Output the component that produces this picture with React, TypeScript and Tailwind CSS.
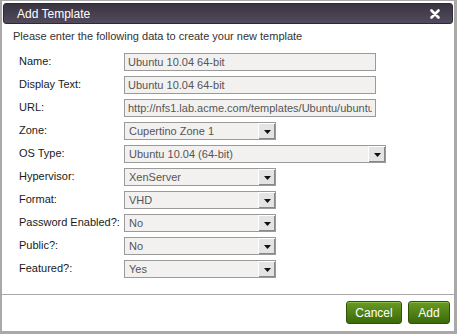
import React from "react";

const Arrow = () => (
  <div className="w-[17px] h-[16px] border-l border-t border-[#ffffff] bg-[#e4e4e4] shadow-[inset_-1px_-1px_0_#888] flex items-center justify-center">
    <svg width="7" height="4" viewBox="0 0 7 4"><path d="M0 0h7L3.5 4z" fill="#111" /></svg>
  </div>
);

const TextInput = ({ value }: { value: string }) => (
  <input
    readOnly
    value={value}
    className="w-[252px] h-[18px] border border-[#9a9a9a] bg-[#f2f1f0] px-[3px] text-[11px] leading-[16px] text-[#555] outline-none"
    style={{ fontFamily: '"Liberation Sans", Arial, sans-serif' }}
  />
);

const Select = ({ value, w }: { value: string; w: string }) => (
  <div className={`${w} h-[18px] border border-[#9a9a9a] bg-[#f2f1f0] flex items-center text-[11px] text-[#555]`}>
    <span className="flex-1 pl-[4px] leading-[16px] whitespace-nowrap overflow-hidden">{value}</span>
    <Arrow />
  </div>
);

const Row = ({ label, children }: { label: string; children: React.ReactNode }) => (
  <div className="flex items-start h-[23px]">
    <div className="w-[105px] text-[11px] text-[#1a1a1a] leading-[13px] pt-[2px]">{label}</div>
    {children}
  </div>
);

export default function App() {
  return (
    <div
      className="w-[457px] h-[334px] bg-white border-t border-l-2 border-r-[3px] border-b-[3px] border-[#a9a9a9] flex flex-col"
      style={{ fontFamily: '"Liberation Sans", Arial, sans-serif' }}
    >
      <div className="mx-[1px] mt-[2px] h-[21px] rounded-[3px] bg-gradient-to-b from-[#3a3541] to-[#524a5d] border border-[#2e2a34] flex items-center justify-between pl-[13px] pr-[12px]">
        <span className="text-white text-[12px]">Add Template</span>
        <svg width="10" height="10" viewBox="0 0 10 10">
          <path d="M1.5 1.5l7 7M8.5 1.5l-7 7" stroke="#fff" strokeWidth="2.6" strokeLinecap="round" />
        </svg>
      </div>
      <div className="pl-[11px] pt-[6px] text-[11px] text-[#333] leading-[13px]">
        Please enter the following data to create your new template
      </div>
      <div className="pl-[17px] pt-[10px] flex flex-col">
        <Row label="Name:"><TextInput value="Ubuntu 10.04 64-bit" /></Row>
        <Row label="Display Text:"><TextInput value="Ubuntu 10.04 64-bit" /></Row>
        <Row label="URL:"><TextInput value="http://nfs1.lab.acme.com/templates/Ubuntu/ubuntu-10.04-64bit.vhd.bz2" /></Row>
        <Row label="Zone:"><Select value="Cupertino Zone 1" w="w-[152px]" /></Row>
        <Row label="OS Type:"><Select value="Ubuntu 10.04 (64-bit)" w="w-[262px]" /></Row>
        <Row label="Hypervisor:"><Select value="XenServer" w="w-[152px]" /></Row>
        <Row label="Format:"><Select value="VHD" w="w-[152px]" /></Row>
        <Row label="Password Enabled?:"><Select value="No" w="w-[152px]" /></Row>
        <Row label="Public?:"><Select value="No" w="w-[152px]" /></Row>
        <Row label="Featured?:"><Select value="Yes" w="w-[152px]" /></Row>
      </div>
      <div className="mt-[11px] border-t border-[#aaa]" />
      <div className="flex justify-end gap-[6px] pr-[4px] pt-[6px]">
        <button className="h-[23px] w-[56px] rounded-[3px] border border-[#2f5208] bg-gradient-to-b from-[#6a9a24] to-[#3b6a08] text-white text-[12px] shadow-[inset_0_1px_0_#8cbc4a]">Cancel</button>
        <button className="h-[23px] w-[42px] rounded-[3px] border border-[#2f5208] bg-gradient-to-b from-[#6a9a24] to-[#3b6a08] text-white text-[12px] shadow-[inset_0_1px_0_#8cbc4a]">Add</button>
      </div>
    </div>
  );
}
